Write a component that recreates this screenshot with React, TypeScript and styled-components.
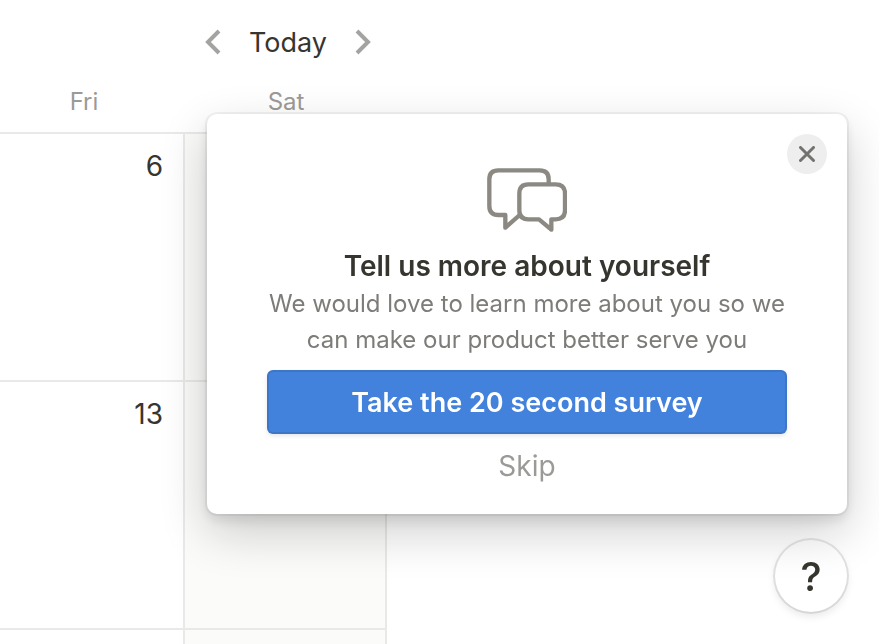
import React from "react";
import styled, { createGlobalStyle } from "styled-components";

const GlobalStyle = createGlobalStyle`
  *, *::before, *::after { box-sizing: border-box; }
  html, body { margin: 0; background: #fff; }
  body {
    color: #37352f;
    font-family: Inter, "Liberation Sans", sans-serif;
    font-size: 28px;
  }
  button { font: inherit; border: 0; padding: 0; cursor: pointer; }
  h2, p { margin: 0; }
`;

const line = "2px solid #e9e9e7";

const Calendar = styled.main`
  display: flex;
  flex-direction: column;
  height: 100vh;
  margin-right: 492px;
  overflow: hidden;
`;

const MonthNav = styled.nav`
  display: flex;
  flex-shrink: 0;
  align-items: center;
  justify-content: flex-end;
  gap: 22px;
  height: 84px;
  padding-right: 10px;
`;

const NavButton = styled.button`
  display: grid;
  place-items: center;
  width: 28px;
  height: 48px;
  background: transparent;
  color: #a3a3a1;
`;

const TodayButton = styled.button`
  height: 48px;
  background: transparent;
  color: #37352f;
  font-size: 27px;
`;

const MonthTable = styled.table`
  align-self: flex-end;
  width: 404px;
  margin-left: -17px;
  table-layout: fixed;
  border-collapse: separate;
  border-spacing: 0;
`;

const Weekday = styled.th`
  height: 50px;
  padding: 0 0 12px;
  border-bottom: ${line};
  color: #9b9a97;
  font-size: 24px;
  line-height: 36px;
  font-weight: 400;
  vertical-align: bottom;
`;

const Day = styled.td<{ $weekend?: boolean }>`
  height: 248px;
  padding: 16px 20px 0 0;
  border-right: ${line};
  border-bottom: ${line};
  background: ${(p) => (p.$weekend ? "#fbfbfa" : "#fff")};
  line-height: 32px;
  text-align: right;
  vertical-align: top;
`;

const SurveyCard = styled.section`
  position: fixed;
  right: 32px;
  bottom: 130px;
  z-index: 2;
  display: flex;
  flex-direction: column;
  align-items: center;
  width: 640px;
  padding: 54px 60px 20px;
  border-radius: 10px;
  background: #fff;
  text-align: center;
  box-shadow:
    0 0 0 2px rgba(15, 15, 15, 0.05),
    0 6px 12px rgba(15, 15, 15, 0.1),
    0 18px 48px rgba(15, 15, 15, 0.2);
`;

const CloseButton = styled.button`
  position: absolute;
  top: 20px;
  right: 20px;
  display: grid;
  place-items: center;
  width: 40px;
  height: 40px;
  border-radius: 50%;
  background: #eeeeee;
  color: #73726e;
`;

const Title = styled.h2`
  margin-top: 14px;
  font-size: 28px;
  line-height: 40px;
  font-weight: 600;
`;

const Description = styled.p`
  color: #7d7c78;
  font-size: 24px;
  line-height: 36px;
`;

const SurveyButton = styled.button`
  width: 100%;
  height: 64px;
  margin-top: 12px;
  border-radius: 6px;
  background: #4281dc;
  color: #fff;
  font-size: 27px;
  font-weight: 600;
  box-shadow:
    inset 0 0 0 2px rgba(15, 15, 15, 0.1),
    0 2px 4px rgba(15, 15, 15, 0.1);
`;

const SkipButton = styled.button`
  height: 56px;
  margin-top: 4px;
  padding: 0 16px;
  background: transparent;
  color: #9b9a97;
`;

const HelpButton = styled.button`
  position: fixed;
  right: 32px;
  bottom: 32px;
  z-index: 1;
  width: 72px;
  height: 72px;
  border-radius: 50%;
  background: #fff;
  color: #37352f;
  font-size: 40px;
  font-weight: 500;
  box-shadow:
    0 0 0 2px rgba(15, 15, 15, 0.1),
    0 4px 8px rgba(15, 15, 15, 0.1);
`;

function Chevron({ points }: { points: string }) {
  return (
    <svg width="16" height="26" viewBox="0 0 16 26" fill="none" stroke="currentColor" strokeWidth="4" aria-hidden="true">
      <polyline points={points} />
    </svg>
  );
}

function BubblesIcon() {
  return (
    <svg width="80" height="64" viewBox="0 0 240 192" fill="none" stroke="#8b8982" strokeWidth="13" strokeLinejoin="round" strokeLinecap="round" aria-hidden="true">
      <path d="M185 48V34Q185 7 158 7H34Q7 7 7 34V114Q7 141 34 141H55V179L98 141" />
      <path d="M124 49H206Q234 49 234 77V127Q234 154 206 154H193V185L156 154H124Q97 154 97 127V77Q97 49 124 49Z" />
    </svg>
  );
}

const weeks = [["6", ""], ["13", ""], ["", ""]];

export default function App() {
  return (
    <>
      <GlobalStyle />
      <Calendar>
        <MonthNav aria-label="Month">
          <NavButton aria-label="Previous month"><Chevron points="14,2 3,13 14,24" /></NavButton>
          <TodayButton>Today</TodayButton>
          <NavButton aria-label="Next month"><Chevron points="2,2 13,13 2,24" /></NavButton>
        </MonthNav>
        <MonthTable>
          <thead>
            <tr>
              <Weekday scope="col">Fri</Weekday>
              <Weekday scope="col">Sat</Weekday>
            </tr>
          </thead>
          <tbody>
            {weeks.map(([friday, saturday], i) => (
              <tr key={i}>
                <Day>{friday}</Day>
                <Day $weekend>{saturday}</Day>
              </tr>
            ))}
          </tbody>
        </MonthTable>
      </Calendar>
      <HelpButton aria-label="Help">?</HelpButton>
      <SurveyCard aria-labelledby="survey-title">
        <CloseButton aria-label="Close">
          <svg width="16" height="16" viewBox="0 0 16 16" stroke="currentColor" strokeWidth="3" strokeLinecap="round" aria-hidden="true">
            <path d="M1.5 1.5L14.5 14.5M14.5 1.5L1.5 14.5" />
          </svg>
        </CloseButton>
        <BubblesIcon />
        <Title id="survey-title">Tell us more about yourself</Title>
        <Description>We would love to learn more about you so we can make our product better serve you</Description>
        <SurveyButton>Take the 20 second survey</SurveyButton>
        <SkipButton>Skip</SkipButton>
      </SurveyCard>
    </>
  );
}
